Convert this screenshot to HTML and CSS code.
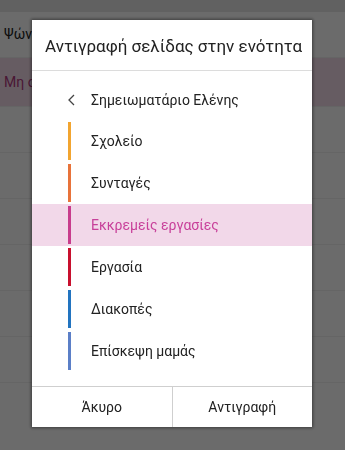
FILE: index.html
```html
<!DOCTYPE html>
<html lang="el">
<head>
    <meta charset="UTF-8">
    <meta name="viewport" content="width=device-width, initial-scale=1.0">
    <title>Αντιγραφή σελίδας</title>
    <link rel="stylesheet" href="styles.css">
</head>
<body>
    <div class="page">
        <div class="topbar"></div>
        <div class="page-row">Ψώνια</div>
        <div class="page-row selected">Μη ολοκληρωμένα</div>
        <div class="page-row"></div>
        <div class="page-row"></div>
        <div class="page-row"></div>
        <div class="page-row"></div>
        <div class="page-row"></div>
        <div class="page-row"></div>
    </div>

    <div class="overlay">
        <div class="dialog">
            <div class="dialog-title">Αντιγραφή σελίδας στην ενότητα</div>
            <div class="dialog-body">
                <div class="back-row">
                    <svg class="chevron" width="7" height="12" viewBox="0 0 7 12">
                        <path d="M6 1 L1 6 L6 11" fill="none" stroke="#444" stroke-width="1.3"/>
                    </svg>
                    <span>Σημειωματάριο Ελένης</span>
                </div>
                <ul class="sections">
                    <li class="section"><span class="bar yellow"></span>Σχολείο</li>
                    <li class="section"><span class="bar orange"></span>Συνταγές</li>
                    <li class="section active"><span class="bar pink"></span>Εκκρεμείς εργασίες</li>
                    <li class="section"><span class="bar red"></span>Εργασία</li>
                    <li class="section"><span class="bar blue"></span>Διακοπές</li>
                    <li class="section"><span class="bar lightblue"></span>Επίσκεψη μαμάς</li>
                </ul>
            </div>
            <div class="dialog-footer">
                <button type="button">Άκυρο</button>
                <button type="button">Αντιγραφή</button>
            </div>
        </div>
    </div>
</body>
</html>
```

FILE: styles.css
```css
body {
    font-family: Roboto, "Noto Sans", sans-serif;
    margin: 0;
    padding: 0;
    background-color: #fff;
    color: #222;
}
.page {
    height: 450px;
    overflow: hidden;
}
.topbar {
    height: 12px;
    background-color: #e6e6e6;
}
.page-row {
    height: 45px;
    line-height: 45px;
    padding-left: 4px;
    font-size: 14px;
    border-bottom: 1px solid #f0f0f0;
    white-space: nowrap;
    overflow: hidden;
}
.page-row.selected {
    height: 48px;
    line-height: 48px;
    background-color: #f4dcea;
    color: #b0387e;
}
.overlay {
    position: fixed;
    top: 0;
    left: 0;
    right: 0;
    bottom: 0;
    background-color: rgba(0, 0, 0, 0.58);
    padding: 20px 33px 23px 32px;
}
.dialog {
    height: 100%;
    background-color: white;
    display: flex;
    flex-direction: column;
    box-shadow: 0 0 3px 1px rgba(0, 0, 0, 0.45);
}
.dialog-title {
    height: 50px;
    line-height: 52px;
    padding-left: 13px;
    font-size: 17px;
    color: #222;
    border-bottom: 1px solid #dcdcdc;
    white-space: nowrap;
}
.dialog-body {
    flex: 1;
    padding-top: 9px;
}
.back-row {
    height: 40px;
    display: flex;
    align-items: center;
    padding-left: 36px;
    font-size: 14px;
    color: #222;
}
.chevron {
    margin-right: 16px;
}
.sections {
    list-style: none;
    margin: 0;
    padding: 0;
}
.section {
    height: 38px;
    padding: 2px 0 2px 36px;
    display: flex;
    align-items: center;
    font-size: 14px;
    color: #222;
}
.section.active {
    background-color: #f2d8e9;
    color: #c8409a;
}
.bar {
    width: 3px;
    height: 38px;
    margin-right: 20px;
}
.yellow { background-color: #f2a530; }
.orange { background-color: #e8733a; }
.pink { background-color: #c83c8c; }
.red { background-color: #c8102e; }
.blue { background-color: #2274c0; }
.lightblue { background-color: #5b7fc7; }
.dialog-footer {
    display: flex;
    height: 40px;
    border-top: 1px solid #cfcfcf;
}
.dialog-footer button {
    flex: 1;
    background: white;
    border: none;
    font-family: inherit;
    font-size: 14px;
    color: #222;
    cursor: pointer;
}
.dialog-footer button + button {
    border-left: 1px solid #cfcfcf;
}
```
